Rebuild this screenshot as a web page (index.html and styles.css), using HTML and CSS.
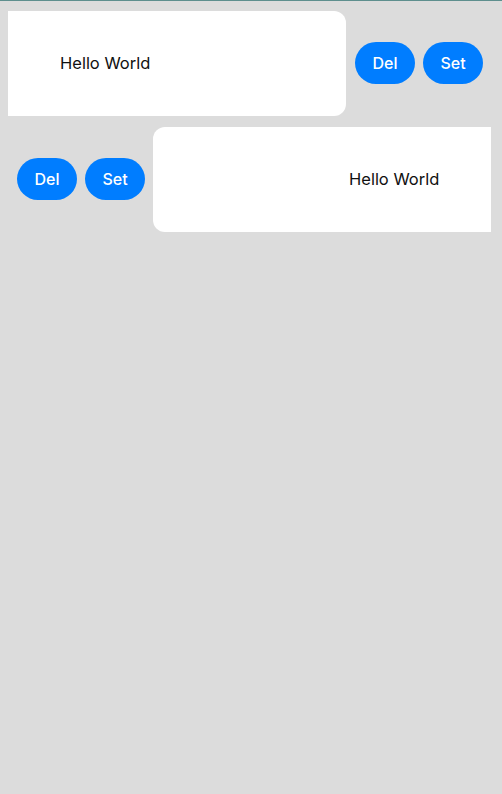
FILE: index.html
```html
<!DOCTYPE html>
<html>
<head>
<meta charset="utf-8">
<link rel="stylesheet" href="styles.css">
</head>
<body>
<div class="list">
  <div class="row row-left">
    <div class="card card-a"><span class="label">Hello World</span></div>
    <div class="actions">
      <button class="btn">Del</button>
      <button class="btn">Set</button>
    </div>
  </div>
  <div class="row row-right">
    <div class="actions">
      <button class="btn">Del</button>
      <button class="btn">Set</button>
    </div>
    <div class="card card-b"><span class="label">Hello World</span></div>
  </div>
</div>
</body>
</html>
```
FILE: styles.css
```css
html, body {
  margin: 0;
  padding: 0;
}
body {
  background: #dcdcdc;
  border-top: 1px solid #5e8f8e;
  height: 793px;
  font-family: Inter, "Noto Sans", sans-serif;
}
.list {
  display: flex;
  flex-direction: column;
  gap: 11px;
  padding-top: 10px;
}
.row {
  display: flex;
  align-items: center;
}
.row-left {
  padding-left: 8px;
}
.row-right {
  padding-left: 17px;
}
.card {
  background: #ffffff;
  width: 338px;
  height: 105px;
  display: flex;
  align-items: center;
  box-sizing: border-box;
}
.card-a {
  border-radius: 0 12px 12px 0;
  padding-left: 52px;
}
.card-b {
  border-radius: 12px 0 0 12px;
  padding-left: 196px;
  margin-left: 8px;
}
.label {
  font-size: 16.5px;
  color: #111111;
  margin-top: -2px;
}
.actions {
  display: flex;
  gap: 8px;
}
.row-left .actions {
  margin-left: 9px;
}
.btn {
  width: 60px;
  height: 42px;
  border: none;
  border-radius: 21px;
  background: #007dff;
  color: #ffffff;
  font-family: Inter, "Noto Sans", sans-serif;
  font-size: 16px;
  font-weight: 500;
  padding: 0;
  margin-top: -2px;
}
```
